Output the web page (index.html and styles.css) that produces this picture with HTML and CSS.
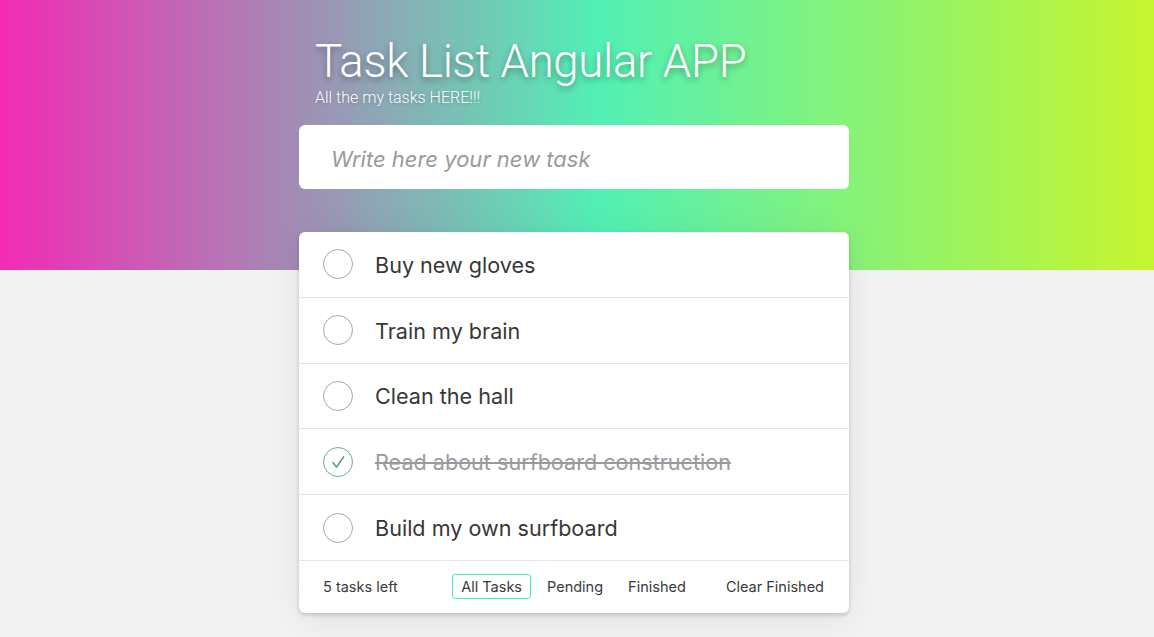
FILE: index.html
```html
<!DOCTYPE html>
<html lang="en">
<head>
<meta charset="utf-8">
<title>Task List Angular APP</title>
<link rel="stylesheet" href="styles.css">
</head>
<body>
<div class="app">
  <header class="header">
    <h1 class="title">Task List Angular APP</h1>
    <p class="subtitle">All the my tasks HERE!!!</p>
  </header>
  <input class="new-task" type="text" placeholder="Write here your new task">
  <section class="card">
    <ul class="tasks">
      <li class="task"><span class="check"></span><span class="label">Buy new gloves</span></li>
      <li class="task"><span class="check"></span><span class="label">Train my brain</span></li>
      <li class="task"><span class="check"></span><span class="label">Clean the hall</span></li>
      <li class="task done"><span class="check"><svg viewBox="0 0 30 30" width="30" height="30"><path d="M9.5 15.5 L13.5 20.5 L21 9.5" fill="none" stroke="#3f9d85" stroke-width="1.6" stroke-linecap="round" stroke-linejoin="round"/></svg></span><span class="label">Read about surfboard construction</span></li>
      <li class="task"><span class="check"></span><span class="label">Build my own surfboard</span></li>
    </ul>
    <footer class="footer">
      <span class="count">5 tasks left</span>
      <div class="filters">
        <button class="filter active">All Tasks</button>
        <button class="filter">Pending</button>
        <button class="filter">Finished</button>
      </div>
      <div class="clear-wrap"><button class="clear">Clear Finished</button></div>
    </footer>
  </section>
</div>
</body>
</html>
```

FILE: styles.css
```css
html, body {
  margin: 0;
  padding: 0;
}
body {
  min-height: 637px;
  background: linear-gradient(to right, #f22bb5 0%, #52f0b5 52%, #c6f52e 100%) top left / 100% 270px no-repeat, #f3f3f3;
  font-family: Inter, "Noto Sans", sans-serif;
  color: #373737;
}
.app {
  width: 550px;
  margin-left: calc(50% - 278px);
  padding-top: 35px;
}
.header {
  padding-left: 16px;
}
.title {
  margin: 0;
  font-family: Roboto, sans-serif;
  font-weight: 300;
  font-size: 45.5px;
  line-height: 53px;
  color: #fff;
  text-shadow: 0 3px 6px rgba(0, 0, 0, 0.35);
  letter-spacing: -0.3px;
}
.subtitle {
  margin: 0;
  font-family: Roboto, sans-serif;
  font-weight: 300;
  font-size: 16px;
  line-height: 19px;
  color: #fff;
  text-shadow: 0 1px 3px rgba(0, 0, 0, 0.25);
}
.new-task {
  display: block;
  box-sizing: border-box;
  width: 550px;
  height: 64px;
  margin-top: 18px;
  padding: 3px 32px 0;
  border: none;
  border-radius: 6px;
  background: #fff;
  font-family: Inter, sans-serif;
  font-size: 22px;
  font-style: italic;
  color: #333;
  outline: none;
}
.new-task::placeholder {
  color: #9a9a9a;
  font-style: italic;
}
.card {
  margin-top: 43px;
  background: #fff;
  border-radius: 6px;
  box-shadow: 0 2px 4px rgba(0, 0, 0, 0.18), 0 8px 40px rgba(0, 0, 0, 0.08);
  overflow: hidden;
}
.tasks {
  list-style: none;
  margin: 0;
  padding: 0;
}
.task {
  display: flex;
  align-items: center;
  height: 64.8px;
  padding: 0 24px;
  border-bottom: 1px solid #e6e6e6;
}
.check {
  box-sizing: border-box;
  width: 30px;
  height: 30px;
  flex: none;
  border: 1px solid #a6a6a6;
  border-radius: 50%;
  display: flex;
  align-items: center;
  justify-content: center;
}
.check svg {
  display: block;
}
.done .check {
  border-color: #6aaa98;
}
.label {
  margin-left: 22px;
  font-size: 21.6px;
  padding-top: 1px;
  color: #373737;
}
.done .label {
  color: #9a9a9e;
  text-decoration: line-through;
  text-decoration-thickness: 1.5px;
}
.footer {
  display: flex;
  align-items: center;
  height: 52px;
  padding: 0 24px;
  font-size: 14.5px;
  color: #3a3a3a;
}
.count {
  flex: 1;
}
.filters {
  display: flex;
  gap: 7px;
  margin-left: -1px;
}
.filter, .clear {
  font-family: Inter, sans-serif;
  font-size: 14.5px;
  color: #3a3a3a;
  background: none;
  border: 1px solid transparent;
  border-radius: 3px;
  padding: 3px 8px;
  line-height: 17px;
  cursor: pointer;
}
.filter.active {
  border-color: #45efbd;
}
.clear-wrap {
  flex: 1;
  text-align: right;
}
.clear {
  padding-right: 0;
}
```
